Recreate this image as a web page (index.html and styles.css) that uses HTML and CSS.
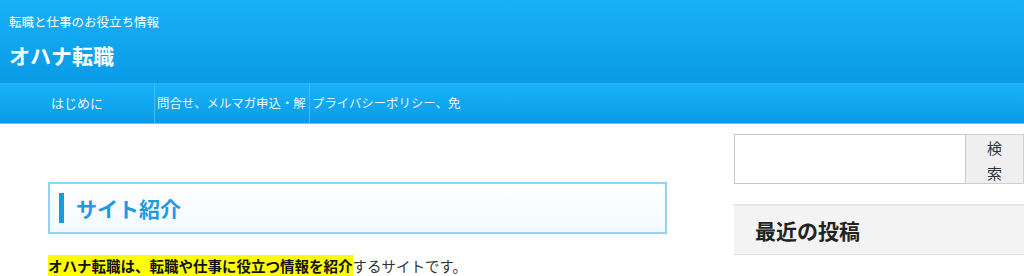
FILE: index.html
```html
<!DOCTYPE html>
<html lang="ja">
<head>
  <meta charset="UTF-8">
  <title>オハナ転職</title>
  <link rel="stylesheet" href="styles.css">
</head>
<body>
  <header class="site-header">
    <p class="tagline">転職と仕事のお役立ち情報</p>
    <div class="site-title">オハナ転職</div>
  </header>
  <nav class="global-nav">
    <a class="nav-item center" href="#">はじめに</a>
    <a class="nav-item" href="#">問合せ、メルマガ申込・解</a>
    <a class="nav-item" href="#">プライバシーポリシー、免</a>
  </nav>
  <div class="wrap">
    <main class="content">
      <h2 class="section-title"><span class="bar"></span>サイト紹介</h2>
      <p class="intro"><strong class="marker">オハナ転職は、転職や仕事に役立つ情報を紹介</strong>するサイトです。</p>
    </main>
    <aside class="sidebar">
      <form class="search">
        <input class="search-input" type="text">
        <button class="search-btn" type="button">検索</button>
      </form>
      <h3 class="widget-title">最近の投稿</h3>
    </aside>
  </div>
</body>
</html>
```

FILE: styles.css
```css
body {
  margin: 0;
  font-family: "Noto Sans CJK JP", "Noto Sans", sans-serif;
  color: #333;
  overflow-x: hidden;
  background: #fff;
}
.site-header {
  height: 83px;
  box-sizing: border-box;
  padding: 13px 9px 0;
  background: linear-gradient(#17b1f9, #0a9ae6);
  color: #fff;
}
.tagline {
  margin: 0;
  font-size: 12.5px;
  line-height: 18px;
}
.site-title {
  margin-top: 11px;
  font-size: 21px;
  font-weight: bold;
  line-height: 26px;
}
.global-nav {
  display: flex;
  height: 40px;
  background: linear-gradient(#19b3fb, #0a9be6);
  border-bottom: 1px solid #5cc8fa;
}
.nav-item {
  display: block;
  width: 155px;
  flex: none;
  border-right: 1px solid #3ec0fb;
  color: #e8f7ff;
  font-size: 12.4px;
  line-height: 40px;
  text-decoration: none;
  white-space: nowrap;
  overflow: hidden;
  padding-left: 2px;
  box-sizing: border-box;
}
.nav-item:last-child {
  border-right: none;
}
.nav-item.center {
  text-align: center;
  padding-left: 0;
  font-size: 13px;
}
.wrap {
  display: flex;
  gap: 67px;
  padding-left: 48px;
}
.content {
  width: 619px;
  flex: none;
  padding-top: 58px;
}
.section-title {
  display: flex;
  align-items: center;
  gap: 12px;
  height: 52px;
  box-sizing: border-box;
  margin: 0;
  padding-left: 9px;
  border: 2px solid #8ad4f7;
  background: linear-gradient(#fff, #f2f9fe);
  color: #1c9be1;
  font-size: 21px;
  font-weight: bold;
}
.bar {
  width: 5px;
  height: 30px;
  background: #1a9ae0;
}
.intro {
  margin: 22px 0 0;
  font-size: 14.5px;
  line-height: 20px;
}
.marker {
  background: #ffff00;
  color: #111;
}
.sidebar {
  width: 320px;
  flex: none;
  padding-top: 10px;
}
.search {
  display: flex;
  margin: 0;
}
.search-input {
  width: 232px;
  height: 50px;
  box-sizing: border-box;
  border: 1px solid #c8c8c8;
  margin: 0;
}
.search-btn {
  width: 58px;
  height: 50px;
  padding: 0 15px;
  margin: 0;
  border: 1px solid #d0d0d0;
  border-left: none;
  background: #efefef;
  color: #333;
  font-family: inherit;
  font-size: 15px;
  line-height: 25px;
}
.widget-title {
  margin: 20px 0 0;
  height: 51px;
  box-sizing: border-box;
  padding-left: 21px;
  border-top: 2px solid #e6e6e6;
  border-bottom: 1px solid #dcdcdc;
  background: #f3f3f3;
  color: #222;
  font-size: 21px;
  font-weight: bold;
  line-height: 48px;
}
```
